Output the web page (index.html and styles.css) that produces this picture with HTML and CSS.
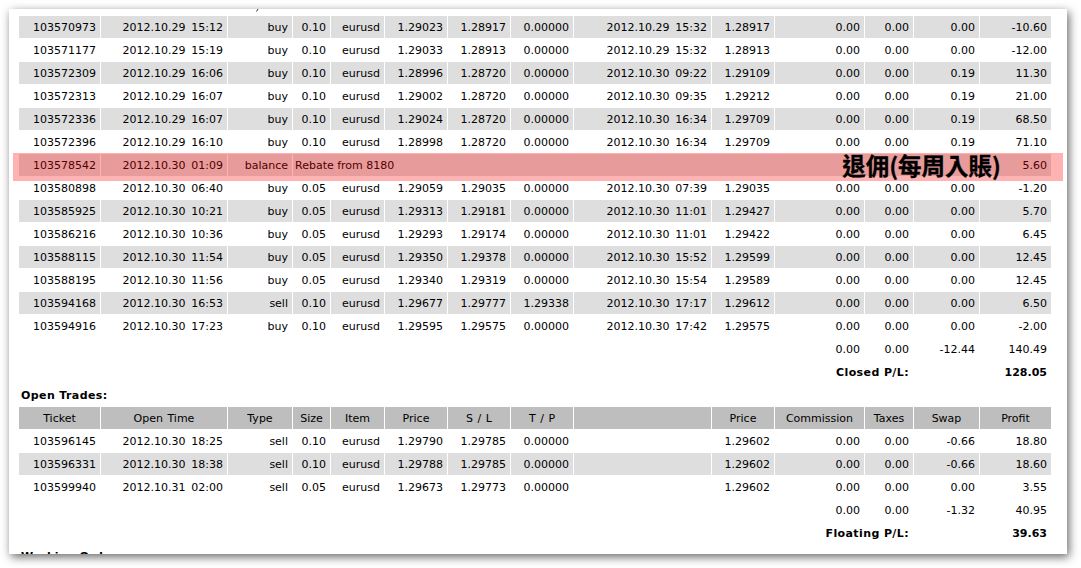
FILE: index.html
```html
<!DOCTYPE html>
<html lang="en">
<head>
<meta charset="utf-8">
<title>Statement</title>
<link rel="stylesheet" href="styles.css">
</head>
<body>
<div class="window">
<svg class="clipmark" width="4" height="3" viewBox="0 0 4 3"><path d="M3 0 L1.5 2.5" stroke="#333" stroke-width="1" fill="none"/></svg>
<table class="report">
<colgroup><col class="c1"><col class="c2"><col class="c3"><col class="c4"><col class="c5"><col class="c6"><col class="c7"><col class="c8"><col class="c9"><col class="c10"><col class="c11"><col class="c12"><col class="c13"><col class="c14"></colgroup>
<tr class="g"><td>103570973</td><td>2012.10.29 15:12</td><td>buy</td><td>0.10</td><td>eurusd</td><td>1.29023</td><td>1.28917</td><td>0.00000</td><td>2012.10.29 15:32</td><td>1.28917</td><td>0.00</td><td>0.00</td><td>0.00</td><td>-10.60</td></tr>
<tr><td>103571177</td><td>2012.10.29 15:19</td><td>buy</td><td>0.10</td><td>eurusd</td><td>1.29033</td><td>1.28913</td><td>0.00000</td><td>2012.10.29 15:32</td><td>1.28913</td><td>0.00</td><td>0.00</td><td>0.00</td><td>-12.00</td></tr>
<tr class="g"><td>103572309</td><td>2012.10.29 16:06</td><td>buy</td><td>0.10</td><td>eurusd</td><td>1.28996</td><td>1.28720</td><td>0.00000</td><td>2012.10.30 09:22</td><td>1.29109</td><td>0.00</td><td>0.00</td><td>0.19</td><td>11.30</td></tr>
<tr><td>103572313</td><td>2012.10.29 16:07</td><td>buy</td><td>0.10</td><td>eurusd</td><td>1.29002</td><td>1.28720</td><td>0.00000</td><td>2012.10.30 09:35</td><td>1.29212</td><td>0.00</td><td>0.00</td><td>0.19</td><td>21.00</td></tr>
<tr class="g"><td>103572336</td><td>2012.10.29 16:07</td><td>buy</td><td>0.10</td><td>eurusd</td><td>1.29024</td><td>1.28720</td><td>0.00000</td><td>2012.10.30 16:34</td><td>1.29709</td><td>0.00</td><td>0.00</td><td>0.19</td><td>68.50</td></tr>
<tr><td>103572396</td><td>2012.10.29 16:10</td><td>buy</td><td>0.10</td><td>eurusd</td><td>1.28998</td><td>1.28720</td><td>0.00000</td><td>2012.10.30 16:34</td><td>1.29709</td><td>0.00</td><td>0.00</td><td>0.19</td><td>71.10</td></tr>
<tr class="g"><td>103578542</td><td>2012.10.30 01:09</td><td>balance</td><td colspan="10" class="l">Rebate from 8180</td><td>5.60</td></tr>
<tr><td>103580898</td><td>2012.10.30 06:40</td><td>buy</td><td>0.05</td><td>eurusd</td><td>1.29059</td><td>1.29035</td><td>0.00000</td><td>2012.10.30 07:39</td><td>1.29035</td><td>0.00</td><td>0.00</td><td>0.00</td><td>-1.20</td></tr>
<tr class="g"><td>103585925</td><td>2012.10.30 10:21</td><td>buy</td><td>0.05</td><td>eurusd</td><td>1.29313</td><td>1.29181</td><td>0.00000</td><td>2012.10.30 11:01</td><td>1.29427</td><td>0.00</td><td>0.00</td><td>0.00</td><td>5.70</td></tr>
<tr><td>103586216</td><td>2012.10.30 10:36</td><td>buy</td><td>0.05</td><td>eurusd</td><td>1.29293</td><td>1.29174</td><td>0.00000</td><td>2012.10.30 11:01</td><td>1.29422</td><td>0.00</td><td>0.00</td><td>0.00</td><td>6.45</td></tr>
<tr class="g"><td>103588115</td><td>2012.10.30 11:54</td><td>buy</td><td>0.05</td><td>eurusd</td><td>1.29350</td><td>1.29378</td><td>0.00000</td><td>2012.10.30 15:52</td><td>1.29599</td><td>0.00</td><td>0.00</td><td>0.00</td><td>12.45</td></tr>
<tr><td>103588195</td><td>2012.10.30 11:56</td><td>buy</td><td>0.05</td><td>eurusd</td><td>1.29340</td><td>1.29319</td><td>0.00000</td><td>2012.10.30 15:54</td><td>1.29589</td><td>0.00</td><td>0.00</td><td>0.00</td><td>12.45</td></tr>
<tr class="g"><td>103594168</td><td>2012.10.30 16:53</td><td>sell</td><td>0.10</td><td>eurusd</td><td>1.29677</td><td>1.29777</td><td>1.29338</td><td>2012.10.30 17:17</td><td>1.29612</td><td>0.00</td><td>0.00</td><td>0.00</td><td>6.50</td></tr>
<tr><td>103594916</td><td>2012.10.30 17:23</td><td>buy</td><td>0.10</td><td>eurusd</td><td>1.29595</td><td>1.29575</td><td>0.00000</td><td>2012.10.30 17:42</td><td>1.29575</td><td>0.00</td><td>0.00</td><td>0.00</td><td>-2.00</td></tr>
<tr><td colspan="10"></td><td>0.00</td><td>0.00</td><td>-12.44</td><td>140.49</td></tr>
<tr class="b"><td colspan="10"></td><td colspan="2" class="sum">Closed P/L:</td><td></td><td>128.05</td></tr>
<tr class="b"><td colspan="14" class="title">Open Trades:</td></tr>
<tr class="h"><td>Ticket</td><td>Open Time</td><td>Type</td><td>Size</td><td>Item</td><td>Price</td><td>S / L</td><td>T / P</td><td></td><td>Price</td><td>Commission</td><td>Taxes</td><td>Swap</td><td>Profit</td></tr>
<tr><td>103596145</td><td>2012.10.30 18:25</td><td>sell</td><td>0.10</td><td>eurusd</td><td>1.29790</td><td>1.29785</td><td>0.00000</td><td></td><td>1.29602</td><td>0.00</td><td>0.00</td><td>-0.66</td><td>18.80</td></tr>
<tr class="g"><td>103596331</td><td>2012.10.30 18:38</td><td>sell</td><td>0.10</td><td>eurusd</td><td>1.29788</td><td>1.29785</td><td>0.00000</td><td></td><td>1.29602</td><td>0.00</td><td>0.00</td><td>-0.66</td><td>18.60</td></tr>
<tr><td>103599940</td><td>2012.10.31 02:00</td><td>sell</td><td>0.05</td><td>eurusd</td><td>1.29673</td><td>1.29773</td><td>0.00000</td><td></td><td>1.29602</td><td>0.00</td><td>0.00</td><td>0.00</td><td>3.55</td></tr>
<tr><td colspan="10"></td><td>0.00</td><td>0.00</td><td>-1.32</td><td>40.95</td></tr>
<tr class="b"><td colspan="10"></td><td colspan="2" class="sum">Floating P/L:</td><td></td><td>39.63</td></tr>
<tr class="b"><td colspan="14" class="title">Working Orders:</td></tr>
</table>
<div class="band"><span class="note">退佣(每周入賬)</span></div>
</div>
</body>
</html>
```
FILE: styles.css
```css
html, body { margin: 0; padding: 0; background: #fff; }
body { padding: 9px 14px 0 9px; overflow: hidden; height: 568px; box-sizing: border-box; }
.window {
  position: relative;
  width: 1058px;
  height: 545px;
  box-sizing: border-box;
  padding: 6px 0 0 9px;
  background: #fff;
  overflow: hidden;
  box-shadow: 2px 3px 9px rgba(0,0,0,.6);
}
.report {
  position: relative;
  table-layout: fixed;
  border-collapse: separate;
  border-spacing: 1px;
  width: 1034px;
  font: 11px "DejaVu Sans", sans-serif;
  color: #000;
}
.c1 { width: 81px; } .c2 { width: 126px; } .c3 { width: 64px; } .c4 { width: 37px; }
.c5 { width: 53px; } .c6 { width: 62px; } .c7 { width: 62px; } .c8 { width: 62px; }
.c9 { width: 137px; } .c10 { width: 62px; } .c11 { width: 89px; } .c12 { width: 48px; }
.c13 { width: 65px; } .c14 { width: 71px; }
.report td {
  height: 22px;
  padding: 0 4px 0 0;
  box-sizing: border-box;
  text-align: right;
  white-space: nowrap;
  overflow: hidden;
}
.report td:nth-child(2), .report td:nth-child(9) { word-spacing: 2.3px; }
.report tr.g td { background: #dedede; }
.report tr.h td { background: #bebebe; text-align: center; padding: 0; word-spacing: 1px; }
.report tr.b td { font-weight: 700; }
.report td.l { text-align: left; padding-left: 2px; word-spacing: 0; }
.report td.title { text-align: left; padding-left: 2px; letter-spacing: .4px; }
.report td.sum { letter-spacing: .4px; word-spacing: 0; }
.clipmark { position: absolute; left: 246px; top: 0; }
.band {
  position: absolute;
  left: 4px; top: 144px;
  width: 1050px; height: 28px;
  background: rgba(255,0,0,.3);
  display: flex;
  align-items: center;
  justify-content: flex-end;
  padding: 0 62px 4px 0;
  box-sizing: border-box;
}
.note {
  font: 700 23.5px "Noto Sans CJK TC", sans-serif;
  -webkit-text-stroke: .3px #000;
  color: #000;
  line-height: 24px;
}
```
